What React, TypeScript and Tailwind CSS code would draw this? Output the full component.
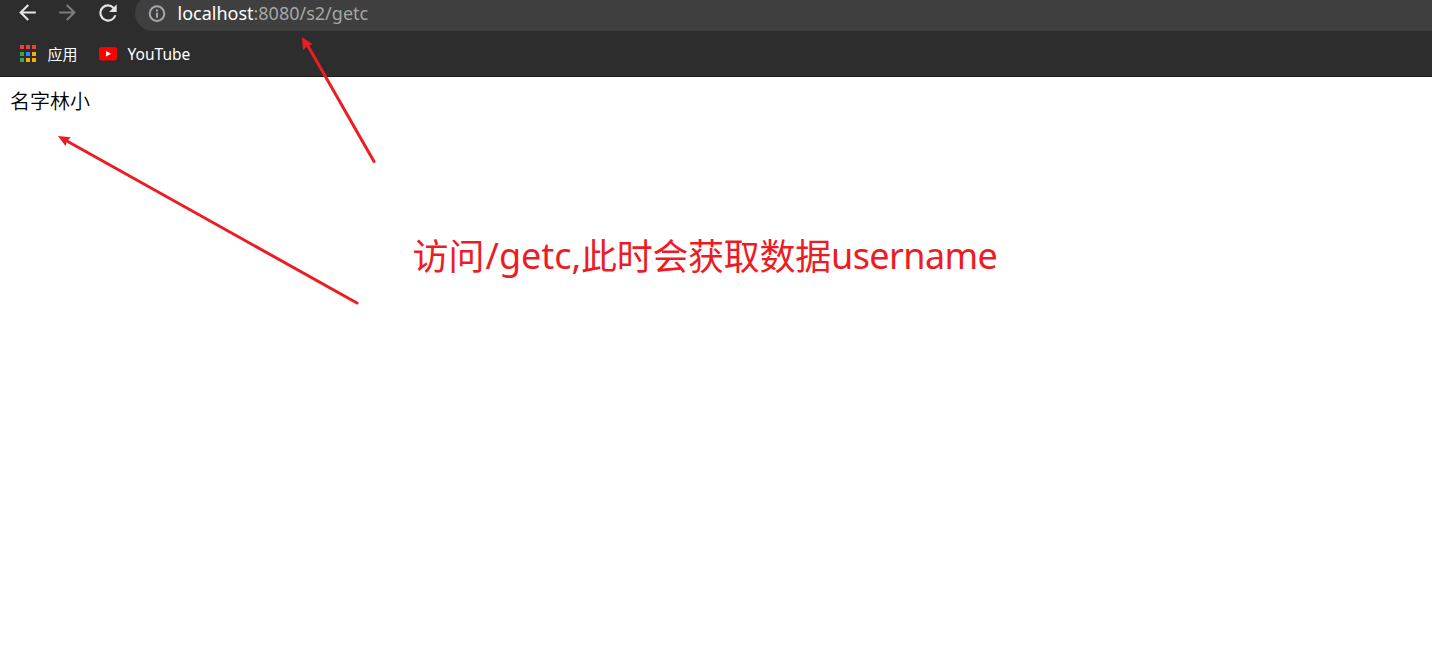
import React from "react";

const appColors = [
  "#ea4335", "#ea4335", "#ea4335",
  "#34a853", "#2a8cf4", "#fbab05",
  "#34a853", "#fbab05", "#fbab05",
];

function Icon({ d, className }: { d: string; className: string }) {
  return (
    <svg viewBox="0 0 24 24" className={className} fill="currentColor">
      <path d={d} />
    </svg>
  );
}

function Toolbar() {
  return (
    <div className="flex h-[31px] items-start pl-[15px]">
      <Icon className="size-[25px] shrink-0 text-[#e6e6e6]" d="M20 11H7.83l5.59-5.59L12 4l-8 8 8 8 1.41-1.41L7.83 13H20v-2z" />
      <Icon className="ml-[15px] size-[25px] shrink-0 text-[#7d7d7d]" d="M12 4l-1.41 1.41L16.17 11H4v2h12.17l-5.58 5.59L12 20l8-8z" />
      <Icon className="ml-[14.5px] size-[26px] shrink-0 text-[#e6e6e6]" d="M17.65 6.35A7.958 7.958 0 0 0 12 4a8 8 0 1 0 7.73 10h-2.08A5.99 5.99 0 0 1 12 18a6 6 0 1 1 0-12c1.66 0 3.14.69 4.22 1.78L13 11h7V4l-2.35 2.35z" />
      <div className="-mt-[5px] ml-[14.5px] flex h-9 flex-1 items-center rounded-l-full bg-[#3f3f3f] pl-[12px]">
        <svg viewBox="0 0 20 20" className="mt-px size-[20px] shrink-0 text-[#a4a7ad]" fill="none" stroke="currentColor" strokeWidth="2">
          <circle cx="10" cy="9.6" r="7.3" />
          <path d="M10 5.6v2M10 8.8v5" />
        </svg>
        <div className="ml-[10.5px] flex font-['Noto_Sans',sans-serif] text-[18px] leading-6 whitespace-nowrap text-[#a6a6a6]">
          <span className="w-[76px] text-white">localhost</span>
          <span>:8080/s2/getc</span>
        </div>
      </div>
    </div>
  );
}

function Bookmarks() {
  return (
    <div className="flex h-[45px] items-center pl-[19.5px] font-['Noto_Sans','Noto_Sans_CJK_SC',sans-serif] text-[15px] leading-5 text-white">
      <div className="grid grid-cols-[repeat(3,4px)] gap-[2.3px]">
        {appColors.map((c, i) => (
          <span key={i} className="size-1" style={{ backgroundColor: c }} />
        ))}
      </div>
      <span className="ml-[11.5px] w-[31px]">应用</span>
      <svg viewBox="0 0 18 14" className="mt-px ml-[20px] h-[14px] w-[18px]">
        <rect width="18" height="13.4" rx="2.6" fill="#f00" />
        <path d="M7 4.1v5.4l5-2.7z" fill="#fff" />
      </svg>
      <span className="ml-[11px] text-[15.5px]">YouTube</span>
    </div>
  );
}

export default function App() {
  return (
    <div className="relative flex h-[669px] w-[1432px] flex-col overflow-hidden bg-white">
      <header className="h-[77px] shrink-0 border-b border-[#1c1a1b] bg-[#2d2d2d]">
        <Toolbar />
        <Bookmarks />
      </header>
      <main className="flex-1">
        <p className="pt-[9px] pl-[10px] font-['Noto_Sans_CJK_SC',sans-serif] text-[20px] leading-[30px] font-[350] text-black">名字林小</p>
      </main>
      <div className="absolute top-[231px] left-[412.5px] flex font-['Noto_Sans','Noto_Sans_CJK_SC',sans-serif] text-[36px] leading-[50px] whitespace-nowrap text-[#ed1c24]">
        <span className="w-[73px] pt-px">访问</span>
        <span className="w-[95.5px]">/getc,</span>
        <span className="w-[250px] pt-px tracking-[-0.3px]">此时会获取数据</span>
        <span className="tracking-[-0.6px]">username</span>
      </div>
      <svg className="pointer-events-none absolute inset-0 h-full w-full" viewBox="0 0 1432 669" fill="#ed1c24" stroke="#ed1c24">
        <path d="M308 46L374 161.5M66 140.5L357 303" strokeWidth="3" strokeLinecap="round" />
        <path d="M302 37L312.7 44.2L307.5 46L303 50ZM58 136L70.8 137.2L67 141L65.5 146Z" stroke="none" />
      </svg>
    </div>
  );
}
